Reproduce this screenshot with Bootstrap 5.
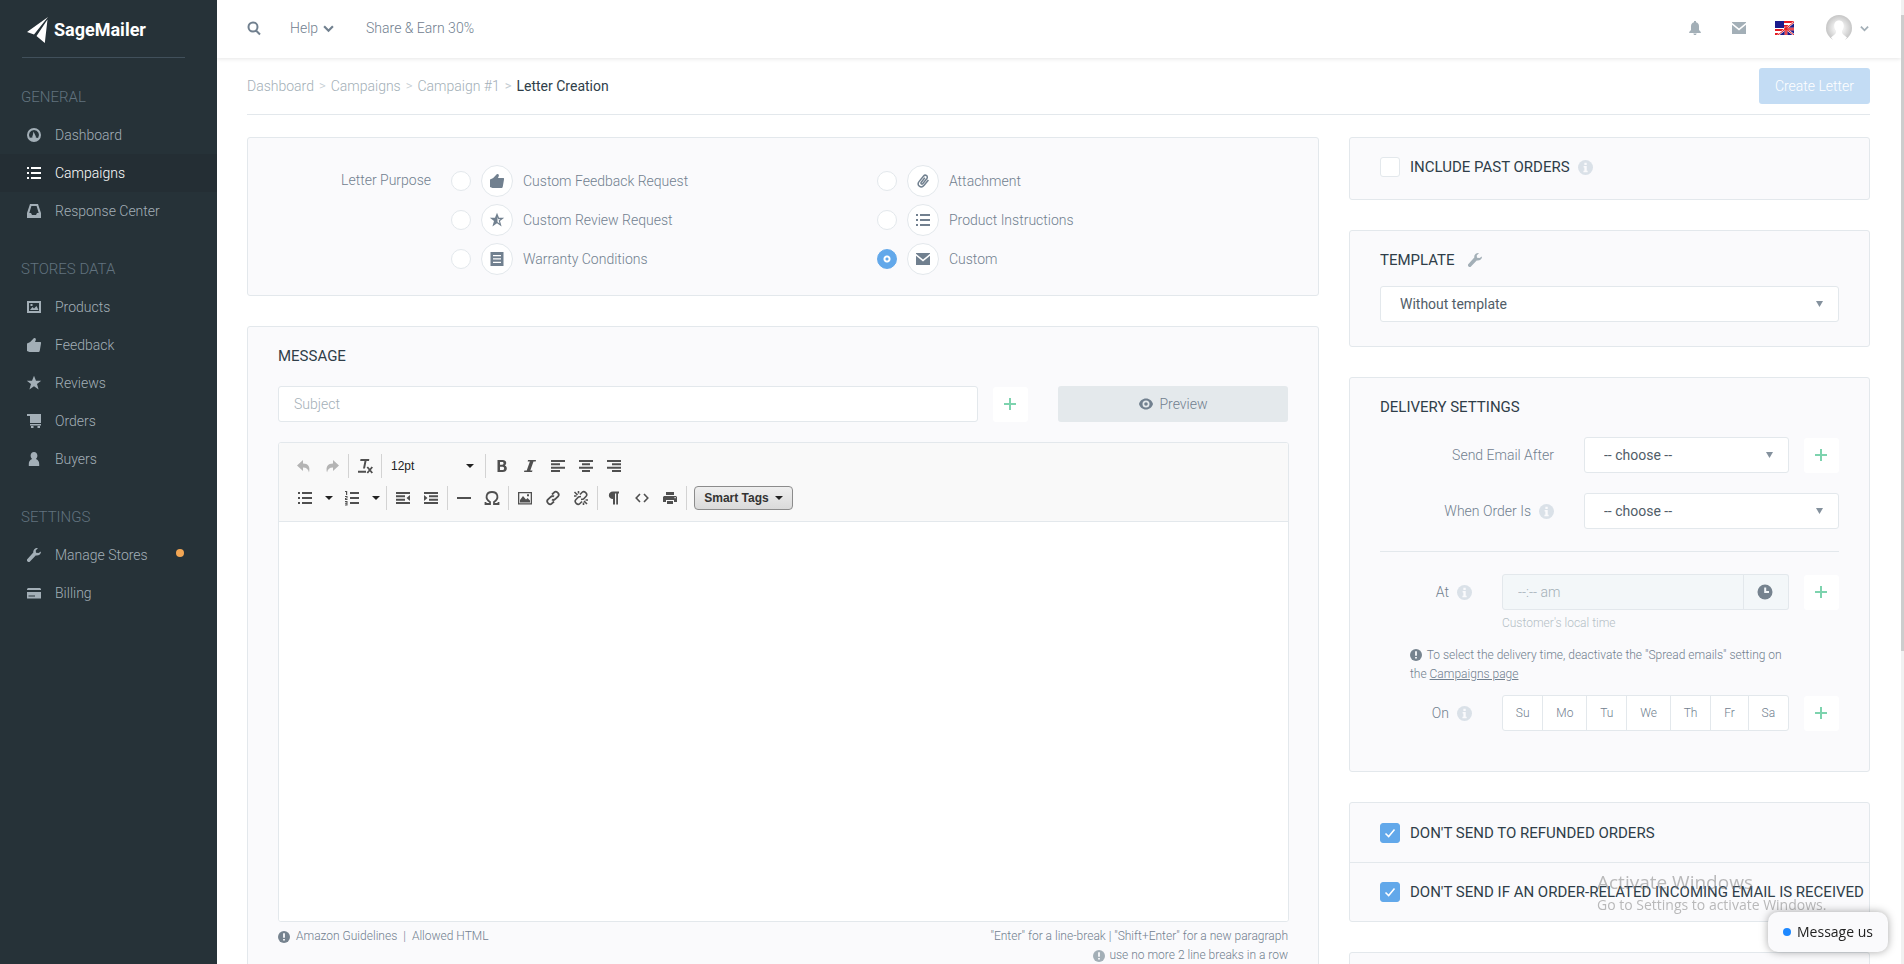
<!DOCTYPE html>
<html lang="en">
<head>
<meta charset="utf-8">
<meta name="viewport" content="width=device-width, initial-scale=1">
<title>Letter Creation - SageMailer</title>
<link href="https://cdn.jsdelivr.net/npm/bootstrap@5.3.0/dist/css/bootstrap.min.css" rel="stylesheet">
<style>
  :root { --line: #e3e8ec; --ink: #2f3e49; --soft: #71808f; --pale: #a3afb7; --panel: #fafafc; --blue: #62a8ea; --green: #7dd3ae; }
  body { font-family: Roboto, "Liberation Sans", sans-serif; font-weight: 300; font-size: 14px; line-height: 22px; color: var(--soft); background: #fff; }
  svg { display: block; flex: none; fill: currentColor; }
  .ico { width: 16px; height: 16px; }
  a { color: inherit; text-decoration: none; }
  .app { height: 100vh; overflow: hidden; }

  /* sidebar */
  .side { width: 217px; background: #263238; color: #a3afb7; flex: none; }
  .brand { height: 58px; margin: 0 32px 0 22px; padding: 2px 0 0 5px; gap: 6px; border-bottom: 1px solid #41505b; color: #fff; font-weight: 700; font-size: 18px; }
  .side-title { font-size: 15px; font-weight: 300; line-height: 24px; margin: 27px 0 7px 21px; color: #62737f; }
  .side-link { height: 38px; padding: 0 33px 0 26px; gap: 13px; display: flex; align-items: center; }
  .side-link .tag { width: 8px; height: 8px; border-radius: 50%; background: #f2a654; margin-left: auto; margin-bottom: 4px; }
  .side-link.active { background: #242e34; color: #fff; }

  /* top bar */
  .topbar { height: 58px; padding: 0 32px 2px 29px; box-shadow: 0 1px 4px rgba(0,0,0,.1); }
  .topbar .tools { color: var(--pale); }
  .plainbtn { border: 0; background: none; padding: 0; color: inherit; font-weight: inherit; }
  .help { gap: 5px; }
  .content-area { padding: 10px 31px 0 30px; }
  .crumbs { border-bottom: 1px solid var(--line); padding-bottom: 10px; }
  .crumbs .breadcrumb { --bs-breadcrumb-item-padding-x: 5px; --bs-breadcrumb-divider-color: #c3ccd2; color: var(--pale); }
  .crumbs .breadcrumb-item + .breadcrumb-item::before { content: ">"; font-size: 13px; }
  .crumbs .breadcrumb-item.active { color: var(--ink); font-weight: 400; }
  .btn-create { width: 111px; height: 36px; background: #c3dcf4; border: 0; color: #fff; font-size: 14px; border-radius: 3px; padding: 0; font-weight: 300; }
  .grid { --bs-gutter-x: 30px; margin-top: 22px; }

  .panel { background: var(--panel); border: 1px solid var(--line); border-radius: 3px; margin-bottom: 30px; }
  .panel-h { font-size: 15px; line-height: 22px; font-weight: 400; color: var(--ink); margin: 0; text-transform: uppercase; }

  /* purpose */
  .purpose { padding: 27px 15px 13px 30px; gap: 20px; }
  .purpose-label { width: 153px; text-align: right; line-height: 30px; flex: none; }
  .opt { height: 32px; margin-bottom: 7px; gap: 10px; display: flex; align-items: center; }
  .opt .round { width: 32px; height: 32px; border: 1px solid var(--line); border-radius: 50%; background: #fff; display: flex; align-items: center; justify-content: center; }
  .opt .form-check-input, .tick { width: 20px; height: 20px; margin: 0; border: 1px solid var(--line); background-color: #fff; float: none; flex: none; }
  .opt .form-check-input:checked { border-color: var(--blue); background: radial-gradient(circle, var(--blue) 1px, #fff 2px, #fff 3px, var(--blue) 4px); }
  .form-check-input.tick { border-radius: 3px; }
  .tick:checked { background-color: var(--blue); border-color: var(--blue);
    background-image: url("data:image/svg+xml,%3csvg xmlns='http://www.w3.org/2000/svg' viewBox='0 0 20 20'%3e%3cpath fill='none' stroke='%23fff' stroke-width='1.700' d='m5 10.500 3.500 3.500L15 6'/%3e%3c/svg%3e") !important; }

  /* form controls */
  .field { height: 36px; border: 1px solid var(--line); border-radius: 3px; font-size: 14px; font-weight: 300; padding: 0 15px; }
  .field::placeholder { color: var(--pale); opacity: 1; }
  .pick { height: 36px; border: 1px solid var(--line); border-radius: 3px; font-size: 14px; font-weight: 400; color: #515d68; padding: 0 32px 0 19px; line-height: 34px;
    background-image: url("data:image/svg+xml,%3csvg xmlns='http://www.w3.org/2000/svg' viewBox='0 0 7 6'%3e%3cpath fill='%2384919d' d='M0 0h7L3.500 6z'/%3e%3c/svg%3e"); background-size: 7px 6px; background-position: right 15px center; }
  .plus { width: 35px; height: 35px; border: 0; border-radius: 3px; background: #fff; color: var(--green); padding: 0; margin-left: 15px; display: flex; align-items: center; justify-content: center; flex: none; }
  .btn-preview { width: 230px; height: 36px; border: 0; border-radius: 3px; background: #e4e9ec; color: var(--soft); font-size: 14px; font-weight: 300; flex: none; gap: 5px; margin-left: 30px; }
  .tiny { font-size: 12px; line-height: 19px; }
  .info { color: #dae1e8; width: 15px; height: 15px; }
  .bang { width: 12px; height: 12px; color: #76838f; }
  .bang.dim { color: #a3afb7; }

  /* editor */
  .message { padding: 18px 30px 0; }
  .subject-row { margin-top: 19px; }
  .editor { margin-top: 20px; margin-right: -1px; border: 1px solid var(--line); border-radius: 3px; background: #fff; overflow: hidden; }
  .bar { background: #f9f9f9; border-bottom: 1px solid var(--line); padding: 7px 11px; color: #505050; }
  .bar-row { height: 32px; display: flex; align-items: center; }
  .bar-group { display: flex; padding-right: 2px; height: 24px; align-items: center; }
  .bar-group + .bar-group { border-left: 1px solid #d3d3d3; padding-left: 2px; }
  .bar button { width: 28px; height: 24px; border: 0; background: none; padding: 0; display: flex; align-items: center; justify-content: center; color: inherit; }
  .bar button:disabled { color: #b4b4b4; }
  .bar .main-part { width: 30px; }
  .bar .drop-part { width: 17px; }
  .bar .size-btn { width: 99px; justify-content: space-between; padding: 0 9px 0 7px; color: #222; }
  .bar .size-btn, .bar .smart { font-family: "Liberation Sans", Arial, sans-serif; font-weight: 400; font-size: 12px; }
  .bar .smart { width: 99px; margin-left: 5px; border: 1px solid #8c8c8c; border-radius: 4px; background: linear-gradient(#efefef, #dadada); color: #333; font-weight: 700; gap: 6px; }
  .caret { width: 8px; height: 4px; }
  .page-edit { height: 399px; border: 0; width: 100%; resize: none; display: block; outline: 0; }
  .foot { padding-top: 5px; }
  .foot-left { gap: 6px; }

  /* right column */
  .side-pad { padding-left: 30px; padding-right: 30px; padding-top: 18px; }
  .past { padding-bottom: 21px; }
  .past label { gap: 10px; }
  .past .info { margin-left: -2px; }
  .template { padding-bottom: 24px; }
  .template .pick { margin-top: 15px; }
  .delivery { padding-bottom: 40px; }
  .first { margin-top: 19px; }
  .slot { margin-top: 20px; }
  .rule { margin: 22px 0; border-color: var(--line); opacity: 1; }
  .hint { margin: 4px 0 0 122px; color: #b5bfc6; }
  .note { margin: 13px 50px 11px 30px; }
  .note .bang { display: inline-block; vertical-align: -2px; margin-right: 2px; }
  .rowcheck { display: flex; align-items: center; gap: 10px; height: 59px; padding-left: 30px; white-space: nowrap; border-color: var(--line) !important; }
  .lab { display: flex; align-items: center; justify-content: flex-end; gap: 8px; margin-right: 30px; flex: none; }
  .lab-wide { width: 174px; }
  .lab-slim { width: 92px; }
  .time .field:disabled { background: #f3f7f9; color: var(--pale); }
  .time .clock { background: #f3f7f9; border: 1px solid var(--line); border-left: 0; border-radius: 0 3px 3px 0; width: 46px; padding: 0; justify-content: center; color: #76838f; }
  .days .btn { height: 36px; border: 1px solid var(--line); background: #fff; color: var(--soft); font-size: 12px; font-weight: 300; padding: 0; border-radius: 3px; line-height: 34px; }

  .ghost { position: fixed; right: 71px; bottom: 49px; width: 236px; color: rgba(120,120,120,.5); font-family: "Open Sans", sans-serif; font-weight: 400; font-size: 14px; line-height: 20px; white-space: nowrap; pointer-events: none; }
  .ghost b { display: block; font-weight: 400; font-size: 19px; line-height: 25px; }
  .chat { position: fixed; right: 16px; bottom: 12px; width: 120px; height: 40px; border: 0; border-radius: 10px; background: #fafafc; box-shadow: 0 0 8px rgba(0,0,0,.35); color: #222; font-family: "Open Sans", sans-serif; font-weight: 400; font-size: 14px; display: flex; align-items: center; justify-content: center; gap: 6px; padding: 0; white-space: nowrap; }
  .chat i { width: 8px; height: 8px; border-radius: 50%; background: #1e88ff; }
  .rail { width: 3px; background: #f1f1f1; flex: none; padding-top: 15px; }
  .rail div { height: 67%; background: #cdcdcd; }
</style>
</head>
<body>

<svg width="0" height="0" class="position-absolute" aria-hidden="true">
  <symbol id="i-gauge" viewBox="0 0 16 16"><path fill-rule="evenodd" d="M8 1a7 7 0 1 1 0 14A7 7 0 0 1 8 1zm0 2a5 5 0 0 0-4.200 7.700L6.500 10.500a2 2 0 0 1 .3-2.200L7.500 4.500l2 4.200a2 2 0 0 1 .3 1.900l2.300.3A5 5 0 0 0 8 3z"/></symbol>
  <symbol id="i-list" viewBox="0 0 16 16"><path d="M1 2h2v2H1zM5 2h10v2H5zM1 7h2v2H1zM5 7h10v2H5zM1 12h2v2H1zM5 12h10v2H5z"/></symbol>
  <symbol id="i-tray" viewBox="0 0 16 16"><path fill-rule="evenodd" d="M4 1h8l3 9v5H1v-5zM5.400 3 3.300 10H5l1 2h4l1-2h1.700L10.600 3z"/></symbol>
  <symbol id="i-image" viewBox="0 0 16 16"><path fill-rule="evenodd" d="M1 2h14v12H1zm2 2v8h10V4zM4 11l2.500-3L8 9.500 10.500 7l2 4zM4.500 5h2v2h-2z"/></symbol>
  <symbol id="i-thumb" viewBox="0 0 16 16"><path d="M1 6.500 4.200 5 8 1c1.400-.3 2.200.7 1.800 2L9 5h5.200c.8 0 1 .7.8 1.400l-1.200 7c-.2 1-.7 1.600-1.600 1.600H3.500L1 14z"/></symbol>
  <symbol id="i-star" viewBox="0 0 16 16"><path d="m8 .8 2 5h5.200L11 9l1.600 5.600L8 11.300l-4.600 3.300L5 9 .8 5.800H6z"/></symbol>
  <symbol id="i-star-half" viewBox="0 0 16 16"><path fill-rule="evenodd" d="m8 .8 2 5h5.200L11 9l1.600 5.600L8 11.300l-4.600 3.300L5 9 .8 5.800H6zM8.500 5v5l2 1.500-.8-3 1.800-1.300H9.300z"/></symbol>
  <symbol id="i-cart" viewBox="0 0 16 16"><path d="M1 1h14v9H4V3H1zM4 11h11v1.500H4z"/><path d="M5 13h2.500v2H5zM11.500 13H14v2h-2.500z"/></symbol>
  <symbol id="i-user" viewBox="0 0 16 16"><path d="M8 1c2 0 3.400 1.500 3.400 3.600 0 1.500-.6 2.800-1.500 3.500 2.200.9 3.300 2.700 3.300 4.900v2H2.800v-2c0-2.200 1.100-4 3.300-4.900-.9-.7-1.500-2-1.500-3.500C4.600 2.500 6 1 8 1z"/></symbol>
  <symbol id="i-wrench" viewBox="0 0 16 16"><path d="M15 4.500 12.500 6 10 5.800 9.700 3.500 12 1C9.500.5 7 2.500 7.300 5.500L1 12.500 1 14l1.200 1h1.300l6.200-6.500c3 .5 5.500-1.400 5.300-4z"/></symbol>
  <symbol id="i-card" viewBox="0 0 16 16"><path fill-rule="evenodd" d="M2 3h12l1 1v1H1V4zM1 7h14v6.500H1zm1.500 3.500v1H9v-1z"/></symbol>
  <symbol id="i-search" viewBox="0 0 16 16"><path fill="none" stroke="currentColor" stroke-width="2" d="M11.500 7A4.500 4.500 0 1 1 2.500 7a4.500 4.500 0 0 1 9 0zM10 10.500l4 4"/></symbol>
  <symbol id="i-down" viewBox="0 0 10 10"><path fill="none" stroke="currentColor" stroke-width="2" d="m1 3 4 4 4-4"/></symbol>
  <symbol id="i-mail" viewBox="0 0 16 16"><path d="M1 2h14v.8L8 8.500 1 2.800zM1 4.800l7 5.600 7-5.600V14H1z"/></symbol>
  <symbol id="i-bell" viewBox="0 0 16 16"><path d="M7 1h2v1.200c2 .5 3 2 3 4V10l1.800 2v1H2.200v-1L4 10V6.200c0-2 1-3.500 3-4zM6.300 13.500h3.400L9 15H7z"/></symbol>
  <symbol id="i-clip" viewBox="0 0 16 16"><path fill="none" stroke="currentColor" stroke-width="1.500" d="M9.800 4.800 6.300 9.200c-1 1.300.6 2.500 1.600 1.300l3.800-4.700c2-2.600-1.300-5-3.300-2.600L4.200 8.400c-3 3.800 1.800 7.600 4.900 3.900l4.300-5.300"/></symbol>
  <symbol id="i-doc" viewBox="0 0 16 16"><path fill-rule="evenodd" d="M1.500 1h13v14h-13zM4 4v1.200h8V4zm0 3.300v1.200h8V7.300zm0 3.400v1.200h8v-1.200z"/></symbol>
  <symbol id="i-plus" viewBox="0 0 14 14"><path d="M6 1h2v5h5v2H8v5H6V8H1V6h5z"/></symbol>
  <symbol id="i-eye" viewBox="0 0 16 16"><path fill-rule="evenodd" d="M8 2.500c3.500 0 6 2.300 7 5.500-1 3.200-3.500 5.500-7 5.500S2 11.200 1 8c1-3.200 3.500-5.500 7-5.500zM8 4.500a3.500 3.500 0 1 0 0 7 3.500 3.500 0 0 0 0-7zm0 1.700a1.800 1.800 0 1 1 0 3.600 1.800 1.800 0 0 1 0-3.600z"/></symbol>
  <symbol id="i-info" viewBox="0 0 16 16"><circle cx="8" cy="8" r="8"/><path fill="#fafafc" d="M6.800 3h2.500v2.200H6.800zM6 6.500h3.300v5h1V13H5.800v-1.500h1V8H6z"/></symbol>
  <symbol id="i-warn" viewBox="0 0 16 16"><circle cx="8" cy="8" r="8"/><path fill="#fafafc" d="M6.800 3h2.400v6H6.800zM6.800 10.500h2.400v2.200H6.800z"/></symbol>
  <symbol id="i-clock" viewBox="0 0 16 16"><circle cx="8" cy="8" r="7.500"/><path fill="#f3f7f9" d="M7.200 3.500h2V7H12v2H7.200z"/></symbol>
  <symbol id="i-undo" viewBox="0 0 16 16"><path d="M7 2v3.500c5 0 7.500 3 6 9-.8-3.500-2.500-5-6-5V13L1 7.500z"/></symbol>
  <symbol id="i-clear" viewBox="0 0 16 16"><path d="M3.500 1h8.800L12 3h-2.500L8 10.500H6L7.500 3H3.200zM1 12.800h8v2H1z"/><path fill="none" stroke="currentColor" stroke-width="1.800" d="m10.300 9 5 6m0-6-5 6"/></symbol>
  <symbol id="i-caret" viewBox="0 0 8 4"><path fill="#222" d="M0 0h8L4 4z"/></symbol>
  <symbol id="i-bold" viewBox="0 0 16 16"><path fill-rule="evenodd" d="M3.500 2h5.300c3.700 0 4.500 4 2 5.500 3.200 1.200 2.700 6.500-2 6.500H3.500zM6 4v2.700h2.300c1.700 0 1.700-2.700 0-2.700zm0 4.700V12h2.600c2 0 2-3.300 0-3.300z"/></symbol>
  <symbol id="i-italic" viewBox="0 0 16 16"><path d="M6 2h8l-.3 1.500h-2.200L8.300 12.500h2.200L10 14H2l.4-1.500h2.300l3.200-9H5.700z"/></symbol>
  <symbol id="i-al" viewBox="0 0 16 16"><path d="M1 2h14v2H1zM1 5.300h9v2H1zM1 8.700h14v2H1zM1 12h9v2H1z"/></symbol>
  <symbol id="i-ac" viewBox="0 0 16 16"><path d="M1 2h14v2H1zM4 5.300h8v2H4zM1 8.700h14v2H1zM4 12h8v2H4z"/></symbol>
  <symbol id="i-ar" viewBox="0 0 16 16"><path d="M1 2h14v2H1zM6 5.300h9v2H6zM1 8.700h14v2H1zM6 12h9v2H6z"/></symbol>
  <symbol id="i-ol" viewBox="0 0 16 16"><path d="M6 2h9v2H6zM6 7h9v2H6zM6 12h9v2H6zM2 1h1.200v4H2zM1 1h1.500v1H1zM1 6h2.500v2.500H2V9h1.500v1H1V8h1.500V7H1zM1 11h2.500v4.500H1v-1h1.500v-.8H1v-1h1.500V12H1z"/></symbol>
  <symbol id="i-out" viewBox="0 0 16 16"><path d="M1 2h14v2H1zM1 5.300h9v2H1zM1 8.700h9v2H1zM1 12h14v2H1zM15 5v6l-3.500-3z"/></symbol>
  <symbol id="i-in" viewBox="0 0 16 16"><path d="M1 2h14v2H1zM6 5.300h9v2H6zM6 8.700h9v2H6zM1 12h14v2H1zM1 5v6l3.500-3z"/></symbol>
  <symbol id="i-hr" viewBox="0 0 16 16"><path d="M1 7h14v2H1z"/></symbol>
  <symbol id="i-omega" viewBox="0 0 16 16"><path fill="none" stroke="currentColor" stroke-width="1.800" d="M1.500 12v2H6v-2C.5 8.500 2 2 8 2s7.500 6.500 2 10v2h4.500v-2"/></symbol>
  <symbol id="i-pic" viewBox="0 0 16 16"><path fill-rule="evenodd" d="M1 2h14v12.500H1zm1.300 1.300v10h11.400v-10zM3 12.500V10l3-4 3 3.500L10.500 8l2.500 2.500v2zM10 4.300h2v2h-2z"/></symbol>
  <symbol id="i-link" viewBox="0 0 16 16"><path fill="none" stroke="currentColor" stroke-width="1.800" d="M7 4.500 9.200 2.300c2-2 6 1.500 3.900 4L10 9.300c-1 .8-2 .9-3 .2M9 11.500l-2.300 2.200c-2 2-6-1.500-3.900-4L6 6.700c1-.8 2-.9 3-.2"/></symbol>
  <symbol id="i-unlink" viewBox="0 0 16 16"><path fill="none" stroke="currentColor" stroke-width="1.600" d="m7 4.500 2.200-2.200c2-2 6 1.500 3.900 4L10.500 9 8 9.500M9 11.500l-2.300 2.200c-2 2-6-1.500-3.900-4L5.500 7 8 6.500M1.500 2l3 3M5.500 1v2.500M1 6h2.500M11 11l3 3M10.500 12.500V15M12.500 10H15"/></symbol>
  <symbol id="i-pil" viewBox="0 0 16 16"><path d="M7 1.500h6v2h-1v11h-1.800v-11H9v11H7V9C1.500 9 1.500 1.500 7 1.500z"/></symbol>
  <symbol id="i-code" viewBox="0 0 16 16"><path fill="none" stroke="currentColor" stroke-width="1.600" d="M6 4 2.200 8 6 12M10 4l3.800 4L10 12"/></symbol>
  <symbol id="i-print" viewBox="0 0 16 16"><path fill-rule="evenodd" d="M4 2h8v3H4zM2 6h12l1 1v5h-3v-2H4v2H1V7zM5 11h6v3H5zM12.500 7v1.200h1.200V7z"/></symbol>
</svg>

<div class="app d-flex">
  <nav class="side" aria-label="Main">
    <a href="#" class="brand d-flex align-items-center">
      <svg width="21" height="26" viewBox="0 0 21 26"><path d="M21 0 0 15l7 2.500zM20.500 2.500 9.500 19l8.300 7z"/></svg>
      <span>SageMailer</span>
    </a>
    <h2 class="side-title">GENERAL</h2>
    <a href="#" class="side-link"><svg class="ico"><use href="#i-gauge"/></svg>Dashboard</a>
    <a href="#" class="side-link active"><svg class="ico"><use href="#i-list"/></svg>Campaigns</a>
    <a href="#" class="side-link"><svg class="ico"><use href="#i-tray"/></svg>Response Center</a>
    <h2 class="side-title">STORES DATA</h2>
    <a href="#" class="side-link"><svg class="ico"><use href="#i-image"/></svg>Products</a>
    <a href="#" class="side-link"><svg class="ico"><use href="#i-thumb"/></svg>Feedback</a>
    <a href="#" class="side-link"><svg class="ico"><use href="#i-star"/></svg>Reviews</a>
    <a href="#" class="side-link"><svg class="ico"><use href="#i-cart"/></svg>Orders</a>
    <a href="#" class="side-link"><svg class="ico"><use href="#i-user"/></svg>Buyers</a>
    <h2 class="side-title">SETTINGS</h2>
    <a href="#" class="side-link"><svg class="ico"><use href="#i-wrench"/></svg>Manage Stores<span class="tag"></span></a>
    <a href="#" class="side-link"><svg class="ico"><use href="#i-card"/></svg>Billing</a>
  </nav>

  <div class="flex-grow-1 overflow-hidden">
    <header class="topbar d-flex align-items-center">
      <button class="plainbtn" aria-label="Search"><svg class="ico"><use href="#i-search"/></svg></button>
      <button class="plainbtn help d-flex align-items-center ms-4 ps-1 me-4">Help <svg width="11" height="11"><use href="#i-down"/></svg></button>
      <a href="#" class="ms-2">Share &amp; Earn 30%</a>
      <div class="tools ms-auto d-flex align-items-center">
        <a href="#" aria-label="Notifications" class="me-4"><svg class="ico"><use href="#i-bell"/></svg></a>
        <a href="#" aria-label="Messages" class="ms-1 me-4"><svg class="ico"><use href="#i-mail"/></svg></a>
        <a href="#" aria-label="Language" class="ms-1 me-4">
          <svg width="19" height="14" viewBox="0 0 19 14"><path fill="#fff" d="M0 0h19v14H0z"/><path fill="#e31b23" d="M0 0h19v2H0zM0 4h15v2H0zM0 8h9v2H0zM0 12h5v2H0z"/><path fill="#1a1a8c" d="M0 0h9v7H0z"/><path fill="#1a1a8c" d="M19 1v13H3z"/><path stroke="#fff" stroke-width="2" d="m10 7 9 7M19 1 3 14"/><path stroke="#f08080" stroke-width="3" d="M11 5v9M9 8h10"/><path stroke="#e31b23" stroke-width="1" d="M11 5v9M9 8h10M10 7l9 7M19 1 3 14"/></svg>
        </a>
        <button class="plainbtn d-flex align-items-center gap-2 ms-2" aria-label="Account">
          <svg width="26" height="26" viewBox="0 0 26 26"><defs><radialGradient id="av"><stop offset=".4" stop-color="#eee"/><stop offset="1" stop-color="#c6c6c6"/></radialGradient></defs><circle cx="13" cy="13" r="13" fill="url(#av)"/><path fill="#fff" d="M13 5.500c3 0 4.800 2.200 4.800 5.300 0 2.500-1 4.200-1.800 5.200-.4 2 .5 3 5 6.500l-3 3.500H8l-3-3.500c4.500-3.500 5.400-4.500 5-6.500-.8-1-1.800-2.700-1.800-5.200 0-3.100 1.800-5.300 4.800-5.300z"/></svg>
          <svg width="9" height="9"><use href="#i-down"/></svg>
        </button>
      </div>
    </header>

    <main class="content-area">
      <div class="crumbs d-flex align-items-center justify-content-between">
        <ol class="breadcrumb mb-0">
          <li class="breadcrumb-item"><a href="#">Dashboard</a></li>
          <li class="breadcrumb-item"><a href="#">Campaigns</a></li>
          <li class="breadcrumb-item"><a href="#">Campaign #1</a></li>
          <li class="breadcrumb-item active" aria-current="page">Letter Creation</li>
        </ol>
        <button class="btn btn-create">Create Letter</button>
      </div>

      <div class="row grid">
        <div class="col-8">
          <section class="panel purpose d-flex">
            <div class="purpose-label" id="purpose">Letter Purpose</div>
            <div class="row row-cols-2 gx-0 flex-grow-1" role="radiogroup" aria-labelledby="purpose">
              <div class="col">
                <label class="opt"><input class="form-check-input" type="radio" name="p"><span class="round"><svg class="ico"><use href="#i-thumb"/></svg></span>Custom Feedback Request</label>
                <label class="opt"><input class="form-check-input" type="radio" name="p"><span class="round"><svg class="ico"><use href="#i-star-half"/></svg></span>Custom Review Request</label>
                <label class="opt"><input class="form-check-input" type="radio" name="p"><span class="round"><svg class="ico"><use href="#i-doc"/></svg></span>Warranty Conditions</label>
              </div>
              <div class="col">
                <label class="opt"><input class="form-check-input" type="radio" name="p"><span class="round"><svg class="ico"><use href="#i-clip"/></svg></span>Attachment</label>
                <label class="opt"><input class="form-check-input" type="radio" name="p"><span class="round"><svg class="ico"><use href="#i-list"/></svg></span>Product Instructions</label>
                <label class="opt"><input class="form-check-input" type="radio" name="p" checked><span class="round"><svg class="ico"><use href="#i-mail"/></svg></span>Custom</label>
              </div>
            </div>
          </section>

          <section class="panel message">
            <h3 class="panel-h">Message</h3>
            <div class="subject-row d-flex align-items-center">
              <input class="form-control field flex-grow-1" type="text" placeholder="Subject" aria-label="Subject">
              <button class="plus" aria-label="Add tag"><svg width="14" height="14"><use href="#i-plus"/></svg></button>
              <button class="btn btn-preview d-flex align-items-center justify-content-center py-0"><svg class="ico"><use href="#i-eye"/></svg>Preview</button>
            </div>
            <div class="editor">
              <div class="bar">
                <div class="bar-row">
                  <div class="bar-group">
                    <button disabled aria-label="Undo"><svg class="ico"><use href="#i-undo"/></svg></button>
                    <button disabled aria-label="Redo"><svg class="ico" viewBox="0 0 16 16"><g transform="matrix(-1 0 0 1 16 0)"><use href="#i-undo"/></g></svg></button>
                  </div>
                  <div class="bar-group"><button aria-label="Clear formatting"><svg class="ico"><use href="#i-clear"/></svg></button></div>
                  <div class="bar-group"><button class="size-btn">12pt <svg class="caret"><use href="#i-caret"/></svg></button></div>
                  <div class="bar-group">
                    <button aria-label="Bold"><svg class="ico"><use href="#i-bold"/></svg></button>
                    <button aria-label="Italic"><svg class="ico"><use href="#i-italic"/></svg></button>
                    <button aria-label="Align left"><svg class="ico"><use href="#i-al"/></svg></button>
                    <button aria-label="Align center"><svg class="ico"><use href="#i-ac"/></svg></button>
                    <button aria-label="Align right"><svg class="ico"><use href="#i-ar"/></svg></button>
                  </div>
                </div>
                <div class="bar-row">
                  <div class="bar-group">
                    <button class="main-part" aria-label="Bullet list"><svg class="ico"><use href="#i-list"/></svg></button>
                    <button class="drop-part" aria-label="Bullet styles"><svg class="caret"><use href="#i-caret"/></svg></button>
                    <button class="main-part" aria-label="Numbered list"><svg class="ico"><use href="#i-ol"/></svg></button>
                    <button class="drop-part" aria-label="Number styles"><svg class="caret"><use href="#i-caret"/></svg></button>
                  </div>
                  <div class="bar-group">
                    <button aria-label="Outdent"><svg class="ico"><use href="#i-out"/></svg></button>
                    <button aria-label="Indent"><svg class="ico"><use href="#i-in"/></svg></button>
                  </div>
                  <div class="bar-group">
                    <button aria-label="Horizontal line"><svg class="ico"><use href="#i-hr"/></svg></button>
                    <button aria-label="Special character"><svg class="ico"><use href="#i-omega"/></svg></button>
                  </div>
                  <div class="bar-group">
                    <button aria-label="Image"><svg class="ico"><use href="#i-pic"/></svg></button>
                    <button aria-label="Link"><svg class="ico"><use href="#i-link"/></svg></button>
                    <button aria-label="Remove link"><svg class="ico"><use href="#i-unlink"/></svg></button>
                  </div>
                  <div class="bar-group">
                    <button aria-label="Paragraph marks"><svg class="ico"><use href="#i-pil"/></svg></button>
                    <button aria-label="Source"><svg class="ico"><use href="#i-code"/></svg></button>
                    <button aria-label="Print"><svg class="ico"><use href="#i-print"/></svg></button>
                  </div>
                  <div class="bar-group"><button class="smart">Smart Tags <svg class="caret"><use href="#i-caret"/></svg></button></div>
                </div>
              </div>
              <textarea class="page-edit" aria-label="Message body"></textarea>
            </div>
            <div class="foot d-flex justify-content-between tiny">
              <div class="foot-left d-flex align-items-center align-self-start">
                <svg class="bang"><use href="#i-warn"/></svg>
                <a href="#">Amazon Guidelines</a><span>|</span><a href="#">Allowed HTML</a>
              </div>
              <div class="text-end pb-4">
                <div>"Enter" for a line-break | "Shift+Enter" for a new paragraph</div>
                <div class="d-flex align-items-center justify-content-end gap-1"><svg class="bang dim"><use href="#i-warn"/></svg>use no more 2 line breaks in a row</div>
              </div>
            </div>
          </section>
        </div>

        <div class="col-4">
          <section class="panel side-pad past">
            <label class="d-flex align-items-center panel-h"><input class="form-check-input tick" type="checkbox">Include past orders<svg class="info"><use href="#i-info"/></svg></label>
          </section>

          <section class="panel side-pad template">
            <h3 class="panel-h d-flex align-items-center gap-2">Template <svg class="ico ms-1" style="color:#a3afb7"><use href="#i-wrench"/></svg></h3>
            <select class="form-select pick" aria-label="Template"><option>Without template</option></select>
          </section>

          <section class="panel side-pad delivery">
            <h3 class="panel-h">Delivery settings</h3>
            <div class="d-flex align-items-center first">
              <label class="lab lab-wide" for="after">Send Email After</label>
              <select id="after" class="form-select pick"><option>-- choose --</option></select>
              <button class="plus" aria-label="Add"><svg width="14" height="14"><use href="#i-plus"/></svg></button>
            </div>
            <div class="d-flex align-items-center slot">
              <label class="lab lab-wide" for="when">When Order Is <svg class="info"><use href="#i-info"/></svg></label>
              <select id="when" class="form-select pick"><option>-- choose --</option></select>
            </div>
            <hr class="rule">
            <div class="d-flex align-items-center">
              <label class="lab lab-slim" for="at">At <svg class="info"><use href="#i-info"/></svg></label>
              <div class="input-group flex-nowrap time">
                <input id="at" class="form-control field" type="text" value="--:-- am" disabled>
                <span class="input-group-text clock"><svg class="ico"><use href="#i-clock"/></svg></span>
              </div>
              <button class="plus" aria-label="Add"><svg width="14" height="14"><use href="#i-plus"/></svg></button>
            </div>
            <div class="tiny hint">Customer's local time</div>
            <p class="tiny note"><svg class="bang"><use href="#i-warn"/></svg> To select the delivery time, deactivate the "Spread emails" setting on the <a href="#" class="text-decoration-underline">Campaigns page</a></p>
            <div class="d-flex align-items-center">
              <div class="lab lab-slim">On <svg class="info"><use href="#i-info"/></svg></div>
              <div class="btn-group flex-grow-1 days">
                <button class="btn">Su</button><button class="btn">Mo</button><button class="btn">Tu</button><button class="btn">We</button><button class="btn">Th</button><button class="btn">Fr</button><button class="btn">Sa</button>
              </div>
              <button class="plus" aria-label="Add"><svg width="14" height="14"><use href="#i-plus"/></svg></button>
            </div>
          </section>

          <section class="panel">
            <label class="rowcheck panel-h"><input class="form-check-input tick" type="checkbox" checked>Don't send to refunded orders</label>
            <label class="rowcheck panel-h border-top"><input class="form-check-input tick" type="checkbox" checked>Don't send if an order-related incoming email is received</label>
          </section>

          <section class="panel side-pad past">
            <label class="d-flex align-items-center panel-h"><input class="form-check-input tick" type="checkbox" aria-label="Exclude"></label>
          </section>
        </div>
      </div>
    </main>
  </div>
  <div class="rail" aria-hidden="true"><div></div></div>
</div>

<div class="ghost"><b>Activate Windows</b>Go to Settings to activate Windows.</div>
<button class="chat"><i></i>Message us</button>

<script src="https://cdn.jsdelivr.net/npm/bootstrap@5.3.0/dist/js/bootstrap.bundle.min.js"></script>
</body>
</html>
